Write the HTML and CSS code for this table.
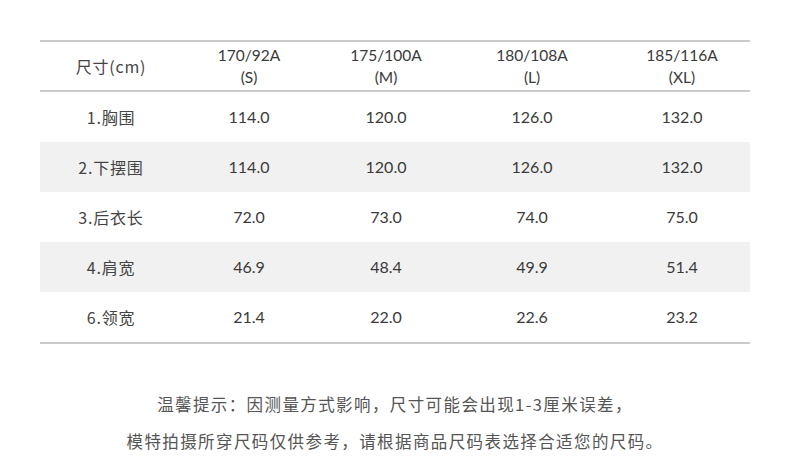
FILE: index.html
```html
<!DOCTYPE html>
<html lang="zh-CN">
<head>
<meta charset="utf-8">
<link rel="stylesheet" href="styles.css">
</head>
<body>
<div class="page">
  <div class="table">
    <div class="row head">
      <div class="cell label">尺寸(cm)</div>
      <div class="cell">170/92A<br>(S)</div>
      <div class="cell">175/100A<br>(M)</div>
      <div class="cell">180/108A<br>(L)</div>
      <div class="cell">185/116A<br>(XL)</div>
    </div>
    <div class="row">
      <div class="cell label">1.胸围</div>
      <div class="cell">114.0</div><div class="cell">120.0</div><div class="cell">126.0</div><div class="cell">132.0</div>
    </div>
    <div class="row alt">
      <div class="cell label">2.下摆围</div>
      <div class="cell">114.0</div><div class="cell">120.0</div><div class="cell">126.0</div><div class="cell">132.0</div>
    </div>
    <div class="row">
      <div class="cell label">3.后衣长</div>
      <div class="cell">72.0</div><div class="cell">73.0</div><div class="cell">74.0</div><div class="cell">75.0</div>
    </div>
    <div class="row alt">
      <div class="cell label">4.肩宽</div>
      <div class="cell">46.9</div><div class="cell">48.4</div><div class="cell">49.9</div><div class="cell">51.4</div>
    </div>
    <div class="row">
      <div class="cell label">6.领宽</div>
      <div class="cell">21.4</div><div class="cell">22.0</div><div class="cell">22.6</div><div class="cell">23.2</div>
    </div>
  </div>
  <div class="note">
    <p>温馨提示：因测量方式影响，尺寸可能会出现1-3厘米误差，</p>
    <p>模特拍摄所穿尺码仅供参考，请根据商品尺码表选择合适您的尺码。</p>
  </div>
</div>
</body>
</html>
```

FILE: styles.css
```css
html, body {
  margin: 0;
  padding: 0;
  background: #ffffff;
}
.page {
  width: 790px;
  padding-top: 40px;
}
.table {
  margin-left: 40px;
  width: 710px;
  border-top: 2px solid #cacaca;
  border-bottom: 2px solid #cacaca;
}
.row {
  display: grid;
  grid-template-columns: 136px 146px 128px 164px 136px;
  height: 50px;
  align-items: center;
}
.row.head {
  height: 48px;
  border-bottom: 2px solid #cacaca;
}
.row.alt {
  background: #f1f1f1;
}
.cell {
  text-align: center;
  font-family: "Lato", "Noto Sans CJK SC", sans-serif;
  font-size: 16px;
  line-height: 22px;
  color: #3a3a3a;
}
.head .cell {
  font-size: 15.5px;
}
.cell.label {
  font-family: "Noto Sans CJK SC", sans-serif;
  font-size: 16px;
  letter-spacing: 0.8px;
  color: #444444;
  padding-left: 6px;
}
.note {
  margin-top: 42px;
  text-align: center;
  font-family: "Noto Sans CJK SC", sans-serif;
  font-size: 16.5px;
  letter-spacing: 1.4px;
  color: #555555;
}
.note p {
  margin: 0;
  line-height: 37px;
}
```
